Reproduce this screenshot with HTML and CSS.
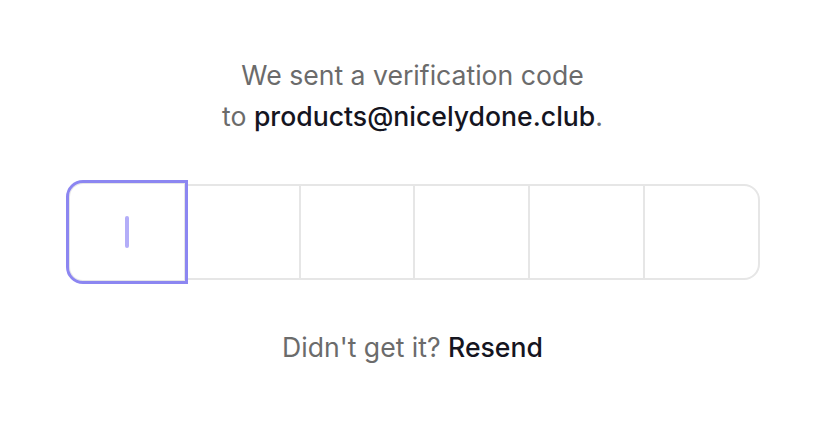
FILE: index.html
```html
<!DOCTYPE html>
<html>
<head>
<meta charset="utf-8">
<link rel="stylesheet" href="styles.css">
</head>
<body>
<main class="verify">
  <p class="intro">We sent a verification code<br>to <strong>products@nicelydone.club</strong>.</p>
  <div class="code">
    <div class="cell focused"><span class="caret"></span></div>
    <div class="cell"></div>
    <div class="cell"></div>
    <div class="cell"></div>
    <div class="cell"></div>
    <div class="cell"></div>
  </div>
  <p class="resend">Didn't get it? <strong>Resend</strong></p>
</main>
</body>
</html>
```

FILE: styles.css
```css
html, body {
  margin: 0;
  padding: 0;
  background: #ffffff;
}
body {
  font-family: "Inter", "Noto Sans", sans-serif;
  width: 825px;
  height: 429px;
  overflow: hidden;
}
.verify {
  display: flex;
  flex-direction: column;
  align-items: center;
  padding-top: 55px;
}
.intro {
  margin: 0;
  font-size: 26.6px;
  line-height: 41px;
  color: #6b6b6b;
  text-align: center;
}
.intro strong, .resend strong {
  font-weight: 500;
  color: #15151f;
}
.code {
  margin-top: 47px;
  width: 692px;
  height: 96px;
  box-sizing: border-box;
  border: 2px solid #e6e6e6;
  border-radius: 16px;
  display: grid;
  grid-template-columns: repeat(6, 1fr);
  margin-left: 2px;
}
.cell {
  border-left: 2px solid #e6e6e6;
  position: relative;
}
.cell:first-child {
  border-left: none;
}
.cell.focused {
  margin: -6px -4px -6px -4px;
  border: 3px solid #8c86f1;
  border-radius: 17px 0 0 17px;
  display: flex;
  align-items: center;
  justify-content: center;
  box-shadow: inset 0 0 0 1px #e6e6e6;
  z-index: 1;
  background: #fff;
}
.caret {
  width: 4px;
  height: 32px;
  border-radius: 2px;
  background: #b3adf8;
  margin-left: 1px;
}
.resend {
  margin: 53px 0 0;
  font-size: 26.6px;
  line-height: 29px;
  color: #6b6b6b;
}
```
